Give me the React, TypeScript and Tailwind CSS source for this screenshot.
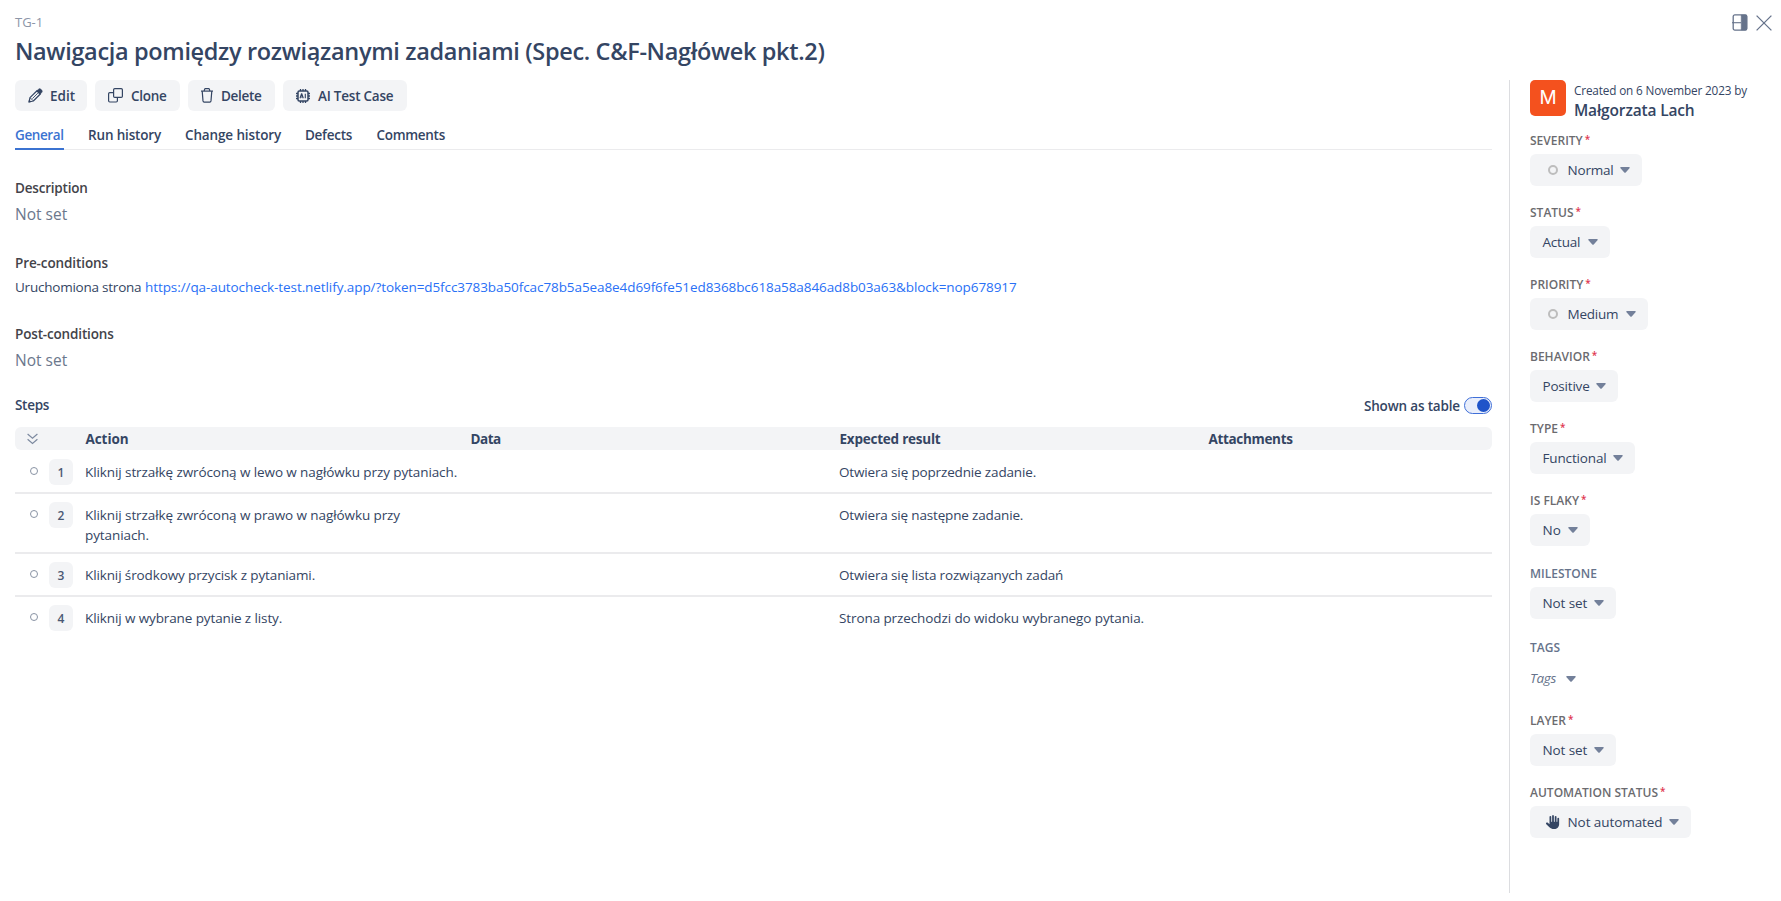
import type { ReactNode } from 'react';
import { FaHand } from 'react-icons/fa6';

function PencilIcon() {
  return (
    <svg className="h-[15px] w-[15px]" viewBox="0 0 15 15" fill="none" stroke="currentColor">
      <path d="M1 14l1-4.400L9 2.700l3.300 3.300-7 7L1 14z" strokeWidth="1.200" strokeLinejoin="round" />
      <path d="M2.200 9.800l3 3M4.400 10.600l5.400-5.400" strokeWidth=".9" />
      <path d="M.8 14.200l.5-2.200 1.700 1.700z" fill="currentColor" strokeWidth=".4" />
      <path d="M8.500 3.100l2-1.900a1.700 1.700 0 0 1 2.400 0l.9.9a1.700 1.700 0 0 1 0 2.400l-1.900 2z" fill="currentColor" strokeWidth=".4" />
    </svg>
  );
}

function CloneIcon() {
  return (
    <svg className="h-[15px] w-[15px]" viewBox="0 0 15 15" fill="none" stroke="currentColor" strokeWidth="1.200">
      <rect x="5.600" y=".6" width="8.800" height="8.800" rx="1.200" />
      <path d="M5.600 4.600H1.800A1.200 1.200 0 0 0 .6 5.800v7a1.200 1.200 0 0 0 1.200 1.200h6.400a1.200 1.200 0 0 0 1.200-1.200V9.400" />
    </svg>
  );
}

function TrashIcon() {
  return (
    <svg className="h-[15px] w-[12px]" viewBox="0 0 12 15" fill="none" stroke="currentColor" strokeWidth="1.200">
      <path d="M0 3.100h12" />
      <path d="M3.100 3l.5-1.700c.1-.4.400-.6.800-.6h3.200c.4 0 .7.200.8.600L8.900 3" />
      <path d="M1.200 3.100l.8 9.800c.1.800.5 1.300 1.200 1.300h5.600c.7 0 1.100-.5 1.200-1.300l.8-9.800" />
    </svg>
  );
}

function ChipIcon() {
  return (
    <svg className="h-[14px] w-[14px]" viewBox="0 0 14 14" fill="none" stroke="currentColor">
      <rect x="2" y="2" width="10" height="10" rx="1.200" strokeWidth="1.500" />
      <path
        d="M4.500 0v2M7 0v2M9.500 0v2M4.500 12v2M7 12v2M9.500 12v2M0 4.500h2M0 7h2M0 9.500h2M12 4.500h2M12 7h2M12 9.500h2"
        strokeWidth="1.300"
      />
      <path d="M4 9.200l1.500-4.300h.3l1.500 4.300M4.500 8h2.300M9.300 4.700v4.600" strokeWidth="1.100" />
    </svg>
  );
}

function PanelIcon() {
  return (
    <svg className="h-[17px] w-[16px]" viewBox="0 0 16 17" fill="none" stroke="currentColor">
      <rect x="1.200" y=".9" width="13.600" height="15.200" rx="1.600" strokeWidth="1.300" />
      <path d="M9.200 1h4c.9 0 1.600.6 1.600 1.500v12c0 .9-.7 1.500-1.600 1.500h-4z" fill="currentColor" strokeWidth=".5" />
      <path d="M0 8.700h9" strokeWidth="1.100" />
    </svg>
  );
}

function CloseIcon() {
  return (
    <svg className="h-[16px] w-[16px]" viewBox="0 0 16 16" fill="none" stroke="currentColor" strokeWidth="1.300">
      <path d="M.6.6l14.800 14.800M15.400.6L.6 15.400" />
    </svg>
  );
}

function ExpandIcon() {
  return (
    <svg className="h-[12px] w-[11px] text-[#7d8aa0]" viewBox="0 0 11 12" fill="none" stroke="currentColor" strokeWidth="1.200">
      <path d="M.6 1l4.900 4.200L10.400 1M.6 6.200l4.900 4.200 4.900-4.200" />
    </svg>
  );
}

function Caret() {
  return (
    <svg className="h-[6px] w-[10px] shrink-0 text-[#73809a]" viewBox="0 0 10 6" fill="currentColor">
      <path d="M1 0h8c.8 0 1 .8.500 1.300L5.700 5.400c-.4.4-1 .4-1.400 0L.5 1.300C0 .8.200 0 1 0z" />
    </svg>
  );
}

function Ring() {
  return <span className="ml-[2px] h-[10px] w-[10px] shrink-0 rounded-full border-2 border-[#bdbdbd]" />;
}

const actions: { label: string; icon: ReactNode; box: string; text: string }[] = [
  { label: 'Edit', icon: <PencilIcon />, box: 'w-[72px]', text: 'ml-[7px]' },
  { label: 'Clone', icon: <CloneIcon />, box: 'w-[85px]', text: 'ml-[8px] tracking-[-0.28px]' },
  { label: 'Delete', icon: <TrashIcon />, box: 'w-[87px]', text: 'ml-[8px] tracking-[-0.3px]' },
  { label: 'AI Test Case', icon: <ChipIcon />, box: 'w-[124px]', text: 'ml-[8px] tracking-[-0.23px]' },
];

const tabs = [
  { label: 'General', cls: 'w-[49px] tracking-[-0.41px]', active: true },
  { label: 'Run history', cls: 'w-[73px] tracking-[-0.16px]', active: false },
  { label: 'Change history', cls: 'w-[96px] tracking-[-0.13px]', active: false },
  { label: 'Defects', cls: 'w-[47.5px] tracking-[-0.28px]', active: false },
  { label: 'Comments', cls: 'w-[69px] tracking-[-0.3px]', active: false },
];

const steps = [
  {
    action: 'Kliknij strzałkę zwróconą w lewo w nagłówku przy pytaniach.',
    result: 'Otwiera się poprzednie zadanie.',
    row: 'h-[44px] border-b-2 pt-[9px]',
    actionCls: 'tracking-[-0.09px]',
    resultCls: 'tracking-[-0.15px]',
  },
  {
    action: 'Kliknij strzałkę zwróconą w prawo w nagłówku przy pytaniach.',
    result: 'Otwiera się następne zadanie.',
    row: 'h-[60px] border-b-2 pt-[8px]',
    actionCls: 'tracking-[-0.09px]',
    resultCls: 'tracking-[-0.16px]',
  },
  {
    action: 'Kliknij środkowy przycisk z pytaniami.',
    result: 'Otwiera się lista rozwiązanych zadań',
    row: 'h-[43px] border-b-2 pt-[8px]',
    actionCls: 'tracking-[-0.12px]',
    resultCls: 'tracking-[-0.15px]',
  },
  {
    action: 'Kliknij w wybrane pytanie z listy.',
    result: 'Strona przechodzi do widoku wybranego pytania.',
    row: 'h-[43px] pt-[8px]',
    actionCls: 'tracking-[-0.11px]',
    resultCls: 'tracking-[-0.1px]',
  },
];

type Field = {
  label: string;
  value: string;
  required?: boolean;
  icon?: ReactNode;
  group: string;
  box: string;
  text: string;
  muted?: boolean;
};

const fields: Field[] = [
  { label: 'SEVERITY', value: 'Normal', required: true, icon: <Ring />, group: 'h-[72px]', box: 'w-[112px]', text: 'tracking-[-0.2px]' },
  { label: 'STATUS', value: 'Actual', required: true, group: 'h-[72px]', box: 'w-[80px]', text: 'tracking-[-0.2px]' },
  { label: 'PRIORITY', value: 'Medium', required: true, icon: <Ring />, group: 'h-[72px]', box: 'w-[118px]', text: 'tracking-[-0.25px]' },
  { label: 'BEHAVIOR', value: 'Positive', required: true, group: 'h-[72px]', box: 'w-[88px]', text: 'tracking-[-0.2px]' },
  { label: 'TYPE', value: 'Functional', required: true, group: 'h-[72px]', box: 'w-[105px]', text: 'tracking-[-0.15px]' },
  { label: 'IS FLAKY', value: 'No', required: true, group: 'h-[72px]', box: 'w-[60px]', text: '' },
  { label: 'MILESTONE', value: 'Not set', group: 'h-[74px]', box: 'w-[86px]', text: 'tracking-[-0.1px]', muted: true },
  { label: 'TAGS', value: 'Tags', group: 'h-[74px]', box: '', text: 'italic', muted: true },
  { label: 'LAYER', value: 'Not set', required: true, group: 'h-[72px]', box: 'w-[86px]', text: 'tracking-[-0.1px]' },
  {
    label: 'AUTOMATION STATUS',
    value: 'Not automated',
    required: true,
    icon: <FaHand className="h-[14px] w-[14px] shrink-0 text-[#344563]" />,
    group: 'h-[72px]',
    box: 'w-[161px]',
    text: 'tracking-[-0.07px]',
  },
];

function Header() {
  return (
    <header className="flex h-[80px] justify-between pt-[12px] pr-[9.5px] pl-[15px]">
      <div>
        <div className="text-[13px] leading-5 text-[#8d96a8]">TG-1</div>
        <h1 className="mt-[3px] text-[23.5px] leading-8 font-semibold tracking-[-0.335px] whitespace-nowrap">
          Nawigacja pomiędzy rozwiązanymi zadaniami (Spec. C&amp;F-Nagłówek pkt.2)
        </h1>
      </div>
      <div className="mt-[2px] flex h-[17px] items-center gap-[7.5px] text-[#66738b]">
        <PanelIcon />
        <CloseIcon />
      </div>
    </header>
  );
}

function StepsTable() {
  return (
    <section>
      <div className="mt-[22px] flex h-5 items-center justify-between font-semibold">
        <h2 className="tracking-[-0.3px]">Steps</h2>
        <div className="flex items-center">
          <span className="mt-[2px] mr-[4px] tracking-[-0.16px]">Shown as table</span>
          <span className="flex h-[17px] w-[28px] items-center justify-end rounded-full border border-[#3f6fd8] bg-[#e9eefb] pr-[1px]">
            <span className="h-[13px] w-[13px] rounded-full bg-[#1f54c9]" />
          </span>
        </div>
      </div>
      <div className="mt-3 grid h-[23px] grid-cols-[70.5px_385px_369px_369px_1fr] items-center rounded-[6px] bg-[#f3f4f6] pt-[2px] font-bold">
        <span className="-mt-[2px] pl-[12px]">
          <ExpandIcon />
        </span>
        <span className="tracking-[-0.08px]">Action</span>
        <span className="tracking-[-0.5px]">Data</span>
        <span className="tracking-[-0.23px]">Expected result</span>
        <span className="tracking-[-0.33px]">Attachments</span>
      </div>
      {steps.map((s, i) => (
        <div key={s.action} className={`grid grid-cols-[34px_36px_376px_378px_1fr] items-start border-[#ebebed] ${s.row}`}>
          <span className="mt-[7.5px] ml-[15px] h-[8px] w-[8px] rounded-full border border-[#8993a4]" />
          <span className="flex h-[26px] w-[24px] items-center justify-center rounded-[6px] bg-[#f3f4f6] pt-[2px] text-[12px] font-semibold text-[#4a5873]">
            {i + 1}
          </span>
          <p className={`mt-[3px] leading-5 ${s.actionCls}`}>{s.action}</p>
          <span />
          <p className={`mt-[3px] leading-5 ${s.resultCls}`}>{s.result}</p>
        </div>
      ))}
    </section>
  );
}

function FieldRow({ field }: { field: Field }) {
  const tags = field.label === 'TAGS';
  return (
    <div className={field.group}>
      <div className={`flex h-[20px] text-[12px] leading-5 font-semibold ${field.muted ? 'pt-[1px] text-[#66738b]' : 'text-[#6b6b6f]'}`}>
        {field.label}
        {field.required && <span className="ml-[2px] text-[10px] leading-[17px] text-[#e0364f]">*</span>}
      </div>
      {tags ? (
        <div className="mt-[6px] flex h-[31px] items-center text-[13.5px] text-[#66738b]">
          <span className="w-[36px] tracking-[-0.3px] italic">{field.value}</span>
          <Caret />
        </div>
      ) : (
        <div
          className={`flex h-[32px] items-center justify-between rounded-[6px] bg-[#f3f4f6] pr-[12px] ${field.muted ? 'mt-[4px]' : 'mt-[3px]'} ${field.icon ? 'pl-[16px]' : 'pl-[12.5px]'} ${field.box}`}
        >
          <span className="flex items-center">
            {field.icon && <span className="flex w-[21.5px] items-center">{field.icon}</span>}
            <span className={`whitespace-nowrap ${field.text}`}>{field.value}</span>
          </span>
          <Caret />
        </div>
      )}
    </div>
  );
}

export default function App() {
  return (
    <div className="h-[901px] w-[1781px] overflow-hidden bg-white font-['Open_Sans','Noto_Sans',sans-serif] text-[13.5px] text-[#344563]">
      <Header />
      <div className="flex h-[813px]">
        <main className="ml-[15px] w-[1477px] shrink-0">
          <div className="flex gap-[8px] font-semibold">
            {actions.map((a) => (
              <button key={a.label} className={`flex h-[31px] items-center rounded-[6px] bg-[#f3f4f6] pl-[13px] whitespace-nowrap ${a.box}`}>
                {a.icon}
                <span className={`pt-[2px] ${a.text}`}>{a.label}</span>
              </button>
            ))}
          </div>
          <nav className="flex h-[39px] gap-[24px] font-semibold shadow-[inset_0_-1px_0_#ebebed]">
            {tabs.map((t) => (
              <span
                key={t.label}
                className={`h-[39px] pt-[14px] leading-5 whitespace-nowrap ${t.cls} ${t.active ? 'border-b-2 border-[#3b73d1] text-[#3b73d1]' : ''}`}
              >
                {t.label}
              </span>
            ))}
          </nav>
          <h2 className="mt-[28px] leading-5 font-semibold tracking-[-0.2px] text-[#434349]">Description</h2>
          <p className="mt-[4px] text-[15.5px] leading-6 text-[#6b778c]">Not set</p>
          <h2 className="mt-[27px] leading-5 font-semibold tracking-[-0.1px] text-[#434349]">Pre-conditions</h2>
          <p className="mt-[4px] flex leading-5 whitespace-nowrap">
            <span className="w-[130px] tracking-[-0.23px]">Uruchomiona strona </span>
            <a className="tracking-[-0.083px] text-[#2970f6]">
              https://qa-autocheck-test.netlify.app/?token=d5fcc3783ba50fcac78b5a5ea8e4d69f6fe51ed8368bc618a58a846ad8b03a63&amp;block=nop678917
            </a>
          </p>
          <h2 className="mt-[27px] leading-5 font-semibold tracking-[-0.16px] text-[#434349]">Post-conditions</h2>
          <p className="mt-[4px] mb-[23px] text-[15.5px] leading-6 text-[#6b778c]">Not set</p>
          <StepsTable />
        </main>
        <aside className="ml-[17px] flex-1 border-l border-[#dcdde0] pl-[20px]">
          <div className="flex h-[51px]">
            <span className="flex h-[36px] w-[36px] items-center justify-center rounded-[5px] bg-[#f4511e] pt-px font-['Inter',sans-serif] text-[19px] text-white">
              M
            </span>
            <div className="ml-[8px]">
              <div className="text-[11.75px] leading-5 tracking-[-0.15px]">Created on 6 November 2023 by</div>
              <div className="text-[15.5px] leading-5 font-semibold tracking-[-0.16px]">Małgorzata Lach</div>
            </div>
          </div>
          {fields.map((f) => (
            <FieldRow key={f.label} field={f} />
          ))}
        </aside>
      </div>
    </div>
  );
}
